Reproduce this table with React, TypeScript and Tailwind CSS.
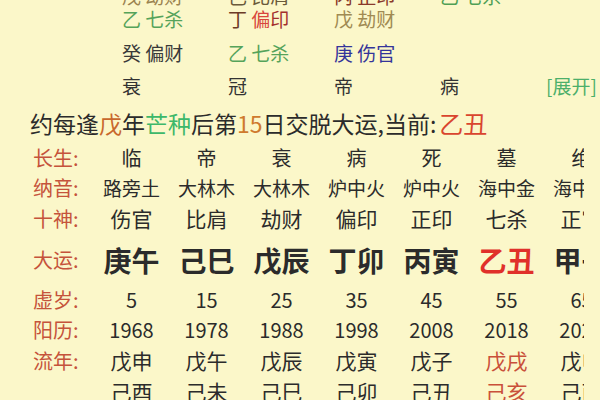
import React from "react";

type Cell = { t: string; c?: string };

const TopCell = ({ parts }: { parts: Cell[] }) => (
  <div className="w-[106px] flex-none whitespace-nowrap">
    {parts.map((p, i) => (
      <span key={i} className={p.c}>
        {p.t}
      </span>
    ))}
  </div>
);

const Row = ({
  label,
  values,
  h,
  size,
  red,
  redClass,
}: {
  label: string;
  values: string[];
  h: string;
  size: string;
  red?: number;
  redClass?: string;
}) => (
  <div className={`flex items-center ${h}`}>
    <div className="w-[94px] flex-none pl-[33px] text-[20px] text-[#c5533b] whitespace-nowrap">{label}</div>
    {values.map((v, i) => (
      <div
        key={i}
        className={`w-[75px] flex-none text-center whitespace-nowrap ${size} ${
          i === red ? redClass ?? "text-[#d33a2c]" : "text-[#2b2b2b]"
        }`}
      >
        {v}
      </div>
    ))}
  </div>
);

export default function App() {
  return (
    <div className="w-[600px] h-[400px] overflow-hidden bg-[#fbf7c9] font-['Noto_Sans_CJK_SC','Noto_Sans',sans-serif] text-[#2b2b2b]">
      <div className="-mt-[14px] pl-[122px] text-[19px] leading-[20px]">
        <div className="flex items-center h-[20px]">
          <TopCell parts={[{ t: "戊 劫财", c: "text-[#9c8450]" }]} />
          <TopCell parts={[{ t: "己 比肩", c: "text-[#6a5a3a]" }]} />
          <TopCell parts={[{ t: "丙 正印", c: "text-[#8a3a2a]" }]} />
          <TopCell parts={[{ t: "乙 七杀", c: "text-[#4f9f55]" }]} />
        </div>
        <div className="flex items-center h-[26px]">
          <TopCell parts={[{ t: "乙 七杀", c: "text-[#55a35a]" }]} />
          <TopCell
            parts={[
              { t: "丁 ", c: "text-[#6b3b26]" },
              { t: "偏", c: "text-[#d8463c]" },
              { t: "印", c: "text-[#a3302c]" },
            ]}
          />
          <TopCell parts={[{ t: "戊 劫财", c: "text-[#a08a52]" }]} />
        </div>
        <div className="flex items-center h-[42px]">
          <TopCell parts={[{ t: "癸 偏财", c: "text-[#3a3a3a]" }]} />
          <TopCell parts={[{ t: "乙 七杀", c: "text-[#55a35a]" }]} />
          <TopCell parts={[{ t: "庚 伤官", c: "text-[#34349a]" }]} />
        </div>
        <div className="flex items-center h-[24px] text-[#333]">
          <TopCell parts={[{ t: "衰" }]} />
          <TopCell parts={[{ t: "冠" }]} />
          <TopCell parts={[{ t: "帝" }]} />
          <TopCell parts={[{ t: "病" }]} />
          <div className="ml-auto pr-[9px] text-[19px] text-[#4caf6a] whitespace-nowrap">[展开]</div>
        </div>
      </div>

      <div className="mt-[10px] h-[30px] flex items-center pl-[30px] text-[23px] text-[#2b2b2b] whitespace-nowrap">
        <span>约每逢</span>
        <span className="text-[#c8682c]">戊</span>
        <span>年</span>
        <span className="text-[#3db86a]">芒种</span>
        <span>后第</span>
        <span className="text-[#cf7a2e]">15</span>
        <span>日交脱大运,当前: </span>
        <span className="ml-[3px] text-[24px] text-[#d9452e]">乙丑</span>
      </div>

      <div className="mt-[5px] w-[584px] overflow-hidden">
        <Row label="长生:" h="h-[30px]" size="text-[20px]" values={["临", "帝", "衰", "病", "死", "墓", "绝"]} />
        <Row
          label="纳音:"
          h="h-[30px]"
          size="text-[19px]"
          values={["路旁土", "大林木", "大林木", "炉中火", "炉中火", "海中金", "海中金"]}
        />
        <Row
          label="十神:"
          h="h-[32px]"
          size="text-[21px]"
          values={["伤官", "比肩", "劫财", "偏印", "正印", "七杀", "正官"]}
        />
        <Row
          label="大运:"
          h="h-[50px]"
          size="text-[28px] font-bold"
          red={5}
          redClass="text-[#e0302a]"
          values={["庚午", "己巳", "戊辰", "丁卯", "丙寅", "乙丑", "甲子"]}
        />
        <Row label="虚岁:" h="h-[30px]" size="text-[20px]" values={["5", "15", "25", "35", "45", "55", "65"]} />
        <Row
          label="阳历:"
          h="h-[30px]"
          size="text-[20px]"
          values={["1968", "1978", "1988", "1998", "2008", "2018", "2028"]}
        />
        <Row
          label="流年:"
          h="h-[31px]"
          size="text-[21px]"
          red={5}
          redClass="text-[#c9503a]"
          values={["戊申", "戊午", "戊辰", "戊寅", "戊子", "戊戌", "戊申"]}
        />
        <Row
          label=""
          h="h-[31px]"
          size="text-[21px]"
          red={5}
          redClass="text-[#c9503a]"
          values={["己酉", "己未", "己巳", "己卯", "己丑", "己亥", "己酉"]}
        />
      </div>
    </div>
  );
}
